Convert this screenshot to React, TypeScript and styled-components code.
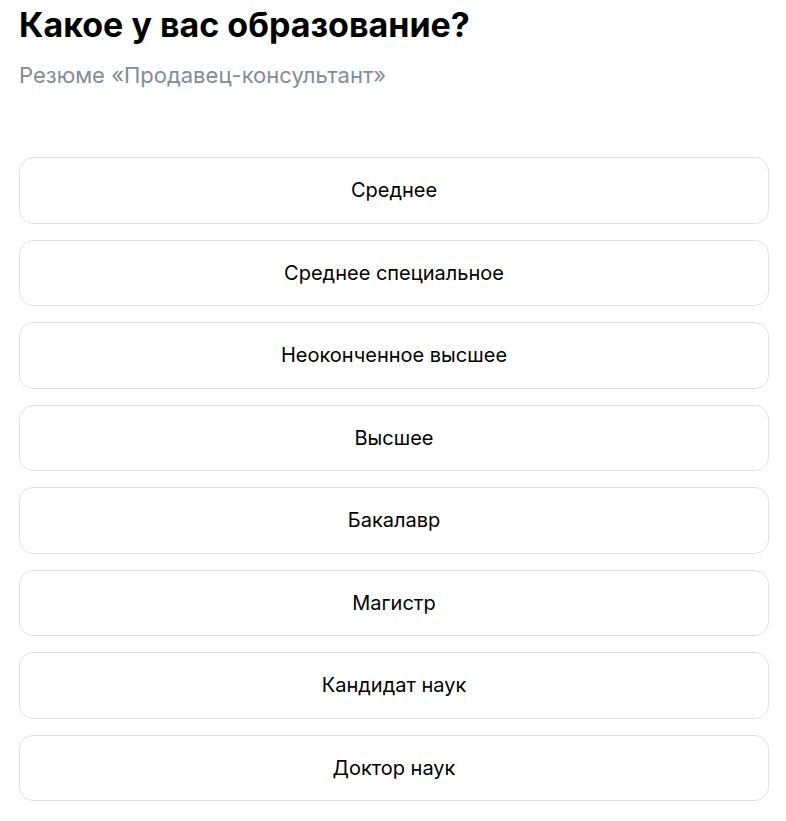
import styled, { createGlobalStyle } from "styled-components";

const GlobalStyle = createGlobalStyle`
  html, body {
    margin: 0;
    padding: 0;
    background: #ffffff;
  }
  body {
    font-family: Inter, "Noto Sans", sans-serif;
    color: #000000;
  }
`;

const Page = styled.div`
  padding: 3px 17px 0 19px;
  display: flex;
  flex-direction: column;
`;

const Title = styled.h1`
  margin: 0;
  font-size: 34px;
  line-height: 44px;
  font-weight: 700;
  color: #000000;
`;

const Subtitle = styled.p`
  margin: 14px 0 0;
  font-size: 22px;
  line-height: 28px;
  color: #818c99;
`;

const Options = styled.div`
  margin-top: 68px;
  display: flex;
  flex-direction: column;
  gap: 16px;
`;

const Option = styled.button`
  height: 66.5px;
  border: 1px solid #dce1e8;
  border-radius: 14px;
  background: #ffffff;
  font-family: Inter, "Noto Sans", sans-serif;
  font-size: 20px;
  color: #000000;
  display: flex;
  align-items: center;
  justify-content: center;
  cursor: pointer;
  padding: 0;
`;

const options = [
  "Среднее",
  "Среднее специальное",
  "Неоконченное высшее",
  "Высшее",
  "Бакалавр",
  "Магистр",
  "Кандидат наук",
  "Доктор наук",
];

export default function App() {
  return (
    <>
      <GlobalStyle />
      <Page>
        <Title>Какое у вас образование?</Title>
        <Subtitle>Резюме «Продавец-консультант»</Subtitle>
        <Options>
          {options.map((item) => (
            <Option key={item}>{item}</Option>
          ))}
        </Options>
      </Page>
    </>
  );
}
